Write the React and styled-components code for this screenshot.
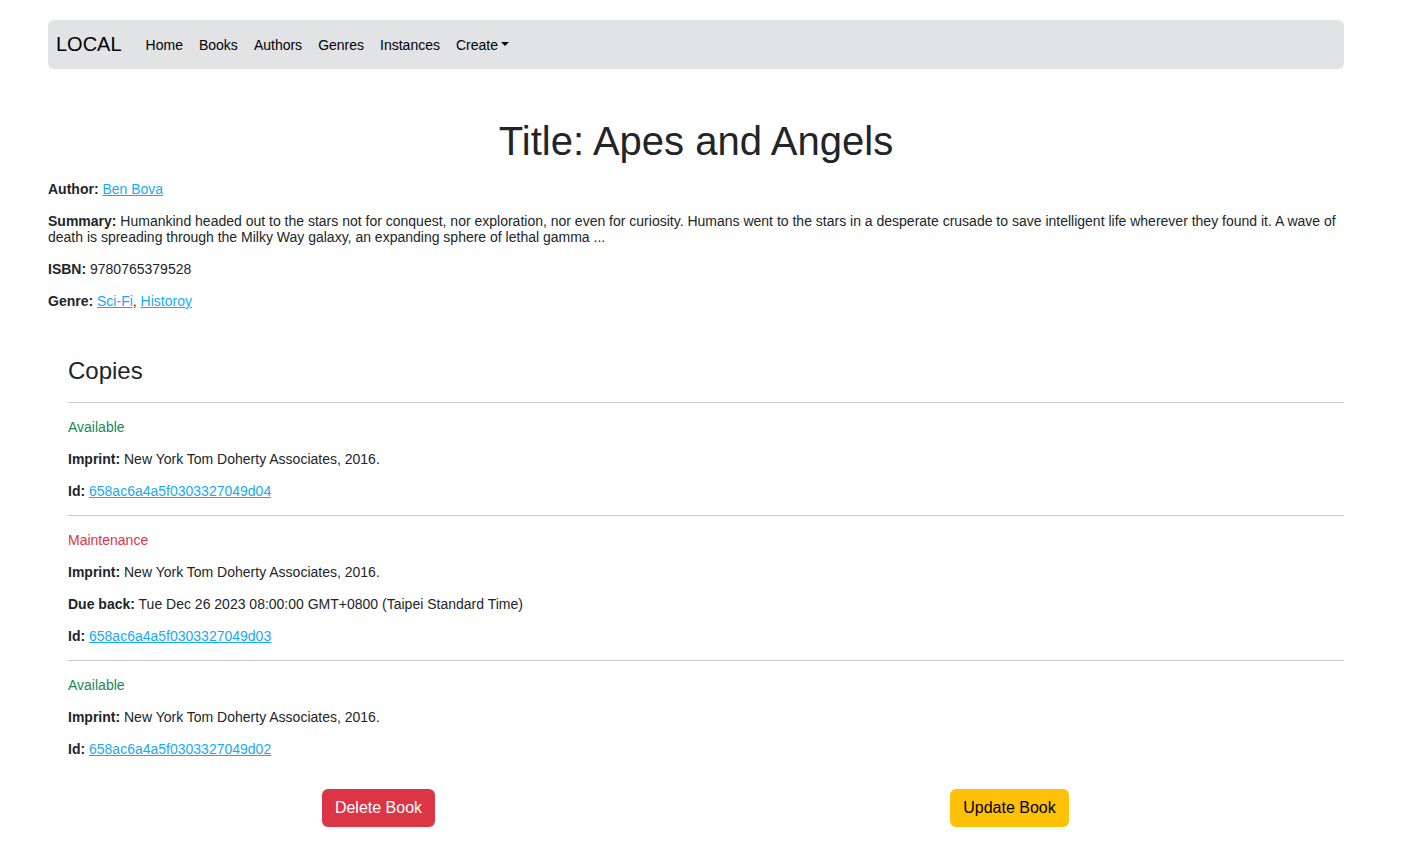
import React from 'react'
import styled, { createGlobalStyle } from 'styled-components'

const GlobalStyle = createGlobalStyle`
    * { box-sizing: border-box; }
    body {
        margin: 0;
        font-family: "Liberation Sans", Arial, sans-serif;
        font-size: 14px;
        color: #212529;
        background: #fff;
    }
`

const copies = [
    { status: 'Available', imprint: 'New York Tom Doherty Associates, 2016.', id: '658ac6a4a5f0303327049d04' },
    { status: 'Maintenance', imprint: 'New York Tom Doherty Associates, 2016.', due: 'Tue Dec 26 2023 08:00:00 GMT+0800 (Taipei Standard Time)', id: '658ac6a4a5f0303327049d03' },
    { status: 'Available', imprint: 'New York Tom Doherty Associates, 2016.', id: '658ac6a4a5f0303327049d02' },
]

const App = () => {
    return (
        <>
            <GlobalStyle />
            <Container>
                <Navbar>
                    <Brand href="#">LOCAL</Brand>
                    <NavList>
                        <NavLink href="#">Home</NavLink>
                        <NavLink href="#">Books</NavLink>
                        <NavLink href="#">Authors</NavLink>
                        <NavLink href="#">Genres</NavLink>
                        <NavLink href="#">Instances</NavLink>
                        <NavLink href="#">Create<Caret /></NavLink>
                    </NavList>
                </Navbar>

                <Title>Title: Apes and Angels</Title>

                <Para><b>Author:</b> <Link href="#">Ben Bova</Link></Para>
                <Para><b>Summary:</b> Humankind headed out to the stars not for conquest, nor exploration, nor even for curiosity. Humans went to the stars in a desperate crusade to save intelligent life wherever they found it. A wave of death is spreading through the Milky Way galaxy, an expanding sphere of lethal gamma ...</Para>
                <Para><b>ISBN:</b> 9780765379528</Para>
                <Para><b>Genre:</b> <Link href="#">Sci-Fi</Link>, <Link href="#">Historoy</Link></Para>

                <Copies>
                    <CopiesTitle>Copies</CopiesTitle>
                    {copies.map(c => (
                        <React.Fragment key={c.id}>
                            <Rule />
                            <Status $ok={c.status === 'Available'}>{c.status}</Status>
                            <Para><b>Imprint:</b> {c.imprint}</Para>
                            {c.due && <Para><b>Due back:</b> {c.due}</Para>}
                            <Para><b>Id:</b> <Link href="#">{c.id}</Link></Para>
                        </React.Fragment>
                    ))}
                </Copies>

                <ButtonRow>
                    <Button $variant="danger">Delete Book</Button>
                    <Button $variant="warning">Update Book</Button>
                </ButtonRow>
            </Container>
        </>
    )
}

const Container = styled.div`
    width: 1296px;
    margin: 0 0 0 48px;
    padding-top: 20px;
    padding-bottom: 24px;
`

const Navbar = styled.nav`
    display: flex;
    align-items: center;
    height: 49px;
    padding: 0 8px;
    background-color: #e2e3e5;
    border-radius: 6px;
`

const Brand = styled.a`
    font-size: 20px;
    color: #000;
    text-decoration: none;
    margin-right: 16px;
    margin-top: -1px;
`

const NavList = styled.div`
    display: flex;
    align-items: center;
`

const NavLink = styled.a`
    display: flex;
    align-items: center;
    padding: 8px;
    color: #000;
    text-decoration: none;
    font-size: 14px;
`

const Caret = styled.span`
    display: inline-block;
    margin-left: 3px;
    margin-top: -2px;
    border-top: 4px solid #000;
    border-left: 4px solid transparent;
    border-right: 4px solid transparent;
`

const Title = styled.h1`
    font-size: 40px;
    font-weight: 400;
    line-height: 48px;
    text-align: center;
    margin: 48px 0 16px;
`

const Para = styled.p`
    margin: 0 0 16px;
    line-height: 16px;

    b { font-weight: 700; }
`

const Link = styled.a`
    color: #17a9f5;
    text-decoration: underline;
`

const Copies = styled.div`
    margin-left: 20px;
    margin-top: 47px;
`

const CopiesTitle = styled.h4`
    font-size: 24px;
    font-weight: 400;
    line-height: 29px;
    margin: 0;
    padding-bottom: 1px;
`

const Rule = styled.hr`
    border: 0;
    border-top: 1px solid #c9cacb;
    margin: 16px 0;
`

const Status = styled.p`
    margin: 0 0 16px;
    line-height: 16px;
    color: ${p => (p.$ok ? '#198754' : '#dc3545')};
`

const ButtonRow = styled.div`
    display: grid;
    grid-template-columns: 1fr 1fr;
    padding: 0 19px 0 15px;
    margin-top: 32px;
    justify-items: center;
`

const Button = styled.button`
    font-family: inherit;
    font-size: 16px;
    line-height: 24px;
    padding: 6px 12px;
    border: 1px solid transparent;
    border-radius: 6px;
    cursor: pointer;
    color: ${p => (p.$variant === 'danger' ? '#fff' : '#000')};
    background-color: ${p => (p.$variant === 'danger' ? '#dc3545' : '#ffc107')};
`

export default App
